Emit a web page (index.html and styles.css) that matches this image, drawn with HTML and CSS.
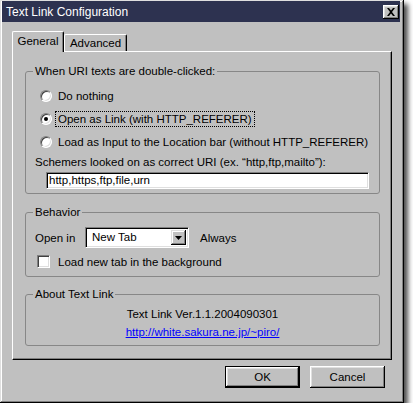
FILE: index.html
```html
<!DOCTYPE html>
<html lang="en">
  <head>
    <meta charset="UTF-8" />
    <title>Text Link Configuration</title>
    <link rel="stylesheet" href="styles.css">
  </head>
  <body>
    <div class="window">
      <div class="titlebar">
        <span class="title">Text Link Configuration</span>
        <span class="close">
          <svg width="10" height="8" viewBox="0 0 10 8">
            <path d="M1 0h2l2 2.5L7 0h2L6 4l3 4H7L5 5.5 3 8H1l3-4z" fill="#000" />
          </svg>
        </span>
      </div>

      <div class="client">
        <div class="tabs">
          <div class="tab active">General</div>
          <div class="tab">Advanced</div>
        </div>

        <div class="panel">
          <fieldset class="group group-uri">
            <legend>When URI texts are double-clicked:</legend>
            <div class="option">
              <span class="radio"></span>
              <span class="label">Do nothing</span>
            </div>
            <div class="option">
              <span class="radio checked"></span>
              <span class="label focused">Open as Link (with HTTP_REFERER)</span>
            </div>
            <div class="option">
              <span class="radio"></span>
              <span class="label">Load as Input to the Location bar (without HTTP_REFERER)</span>
            </div>
            <div class="hint">Schemers looked on as correct URI (ex. “http,ftp,mailto”):</div>
            <div class="textbox">http,https,ftp,file,urn</div>
          </fieldset>

          <fieldset class="group group-behavior">
            <legend>Behavior</legend>
            <div class="open-row">
              <span class="open-label">Open in</span>
              <div class="select">
                <span class="select-value">New Tab</span>
                <span class="select-button">
                  <svg width="7" height="4" viewBox="0 0 7 4">
                    <path d="M0 0h7L3.5 4z" fill="#000" />
                  </svg>
                </span>
              </div>
              <span>Always</span>
            </div>
            <div class="check-row">
              <span class="checkbox"></span>
              <span class="label">Load new tab in the background</span>
            </div>
          </fieldset>

          <fieldset class="group group-about">
            <legend>About Text Link</legend>
            <div class="about-line">Text Link Ver.1.1.2004090301</div>
            <div class="about-line"><a href="#">http://white.sakura.ne.jp/~piro/</a></div>
          </fieldset>
        </div>

        <div class="buttons">
          <div class="button default">OK</div>
          <div class="button">Cancel</div>
        </div>
      </div>
    </div>
  </body>
</html>
```

FILE: styles.css
```css
* {
  box-sizing: border-box;
}

body {
  margin: 0;
  background: #ffffff;
  font-family: "Liberation Sans", Arial, sans-serif;
  font-size: 11.5px;
  color: #000000;
}

.window {
  width: 404px;
  height: 403px;
  padding: 1px 4px 4px 2px;
  background: #c0c0c0;
  box-shadow: inset -1px -1px #000000, inset 1px 1px #dfdfdf,
    inset -2px -2px #808080, inset 2px 2px #ffffff,
    4px 4px 5px rgba(0, 0, 0, 0.7);
}

.titlebar {
  height: 21px;
  padding: 0 1px 0 4px;
  display: flex;
  align-items: center;
  justify-content: space-between;
  background: #2d3250;
  color: #ffffff;
  font-size: 12px;
}

.close {
  width: 16px;
  height: 14px;
  display: flex;
  align-items: center;
  justify-content: center;
  background: #c0c0c0;
  box-shadow: inset -1px -1px #000000, inset 1px 1px #ffffff,
    inset -2px -2px #808080, inset 2px 2px #dfdfdf;
}

.client {
  padding: 9px 8px 0 10px;
}

/* pestañas */
.tabs {
  height: 20px;
  display: flex;
  align-items: flex-end;
}

.tab {
  height: 17px;
  width: 63px;
  padding-top: 2px;
  text-align: center;
  white-space: nowrap;
  border-top: 1px solid #ffffff;
  border-left: 1px solid #ffffff;
  border-right: 1px solid #000000;
  border-radius: 2px 2px 0 0;
  box-shadow: inset -1px 0 #808080;
}

.tab.active {
  position: relative;
  z-index: 1;
  width: 52px;
  height: 21px;
  margin: 0 0 -1px 0;
  padding-top: 3px;
  background: #c0c0c0;
}

.panel {
  height: 309px;
  padding: 12px 11px 0 12px;
  border: 1px solid;
  border-color: #ffffff #000000 #000000 #ffffff;
  box-shadow: inset -1px -1px #808080;
}

/* grupos */
.group {
  margin: 0;
  padding: 0 10px 4px 10px;
  border: 1px solid #878787;
  border-radius: 3px;
  min-width: 0;
}

.group legend {
  margin-left: -3px;
  padding: 0 2px;
  line-height: 14px;
}

.group-behavior {
  margin-top: 11px;
  padding-bottom: 6px;
}

.group-about {
  margin-top: 10px;
  padding-bottom: 4px;
}

.option {
  height: 23px;
  display: flex;
  align-items: center;
  padding-left: 4px;
  white-space: nowrap;
}

.option:first-of-type {
  margin-top: 6px;
}

.radio {
  flex: none;
  width: 12px;
  height: 12px;
  margin-right: 4px;
  border-radius: 50%;
  border: 1px solid;
  border-color: #808080 #ffffff #ffffff #808080;
  background: #ffffff;
  box-shadow: inset 1px 1px #404040, inset -1px -1px #dfdfdf;
  display: flex;
  align-items: center;
  justify-content: center;
}

.radio.checked::after {
  content: "";
  width: 4px;
  height: 4px;
  border-radius: 50%;
  background: #000000;
}

.label {
  padding: 1px 2px;
}

.label.focused {
  outline: 1px dotted #000000;
}

.hint {
  height: 18px;
  line-height: 18px;
  margin-left: -1px;
  white-space: nowrap;
}

.textbox {
  height: 17px;
  margin: 1px 0 0 10px;
  padding: 1px 2px;
  line-height: 13px;
  background: #ffffff;
  border: 1px solid;
  border-color: #808080 #ffffff #ffffff #808080;
  box-shadow: inset 1px 1px #000000, inset -1px -1px #dfdfdf;
}

.open-row {
  margin-top: 8px;
  height: 21px;
  display: flex;
  align-items: center;
  margin-left: -1px;
}

.open-label {
  width: 50px;
}

.select {
  width: 104px;
  height: 21px;
  margin-right: 11px;
  padding: 2px;
  display: flex;
  align-items: stretch;
  background: #ffffff;
  border: 1px solid;
  border-color: #808080 #ffffff #ffffff #808080;
  box-shadow: inset 1px 1px #000000, inset -1px -1px #dfdfdf;
}

.select-value {
  flex: 1;
  padding-left: 4px;
  line-height: 15px;
}

.select-button {
  width: 15px;
  display: flex;
  align-items: center;
  justify-content: center;
  background: #c0c0c0;
  box-shadow: inset -1px -1px #000000, inset 1px 1px #dfdfdf,
    inset -2px -2px #808080, inset 2px 2px #ffffff;
}

.check-row {
  margin-top: 5px;
  height: 17px;
  display: flex;
  align-items: center;
  padding-left: 1px;
}

.checkbox {
  width: 13px;
  height: 13px;
  margin-right: 6px;
  background: #ffffff;
  border: 1px solid;
  border-color: #808080 #ffffff #ffffff #808080;
  box-shadow: inset 1px 1px #404040, inset -1px -1px #dfdfdf;
}

.about-line {
  line-height: 18px;
  text-align: center;
}

.about-line:first-of-type {
  margin-top: 4px;
}

.about-line a {
  color: #0000ff;
}

/* botones */
.buttons {
  margin-top: 6px;
  padding-right: 7px;
  display: flex;
  justify-content: flex-end;
  gap: 10px;
}

.button {
  width: 75px;
  height: 22px;
  display: flex;
  align-items: center;
  justify-content: center;
  background: #c0c0c0;
  box-shadow: inset -1px -1px #000000, inset 1px 1px #ffffff,
    inset -2px -2px #808080, inset 2px 2px #dfdfdf;
}

.button.default {
  border: 1px solid #000000;
}
```
